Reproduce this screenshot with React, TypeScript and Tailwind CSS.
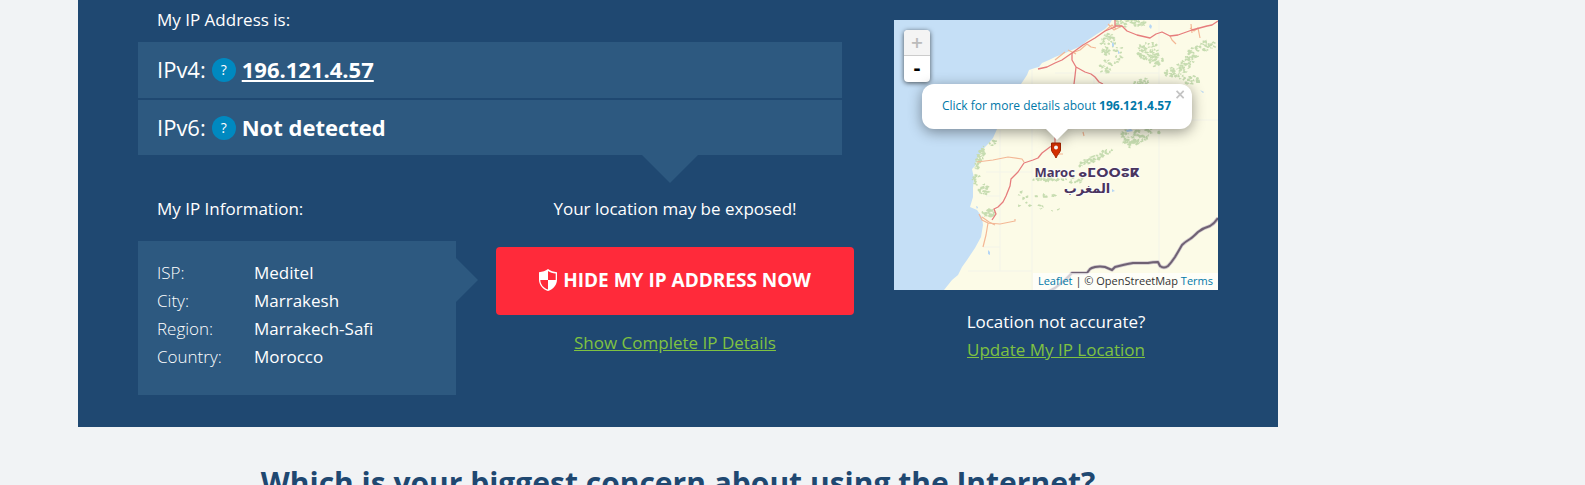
import React from "react";

type Cluster = [cx: number, cy: number, rx: number, ry: number, tilt: number, count: number];

const forests: Cluster[] = [
  [236, 3, 17, 4, 0, 50],
  [214, 24, 8, 11, 0.2, 46],
  [211, 46, 7, 7, 0, 22],
  [224, 36, 4, 12, 0.2, 14],
  [254, 31, 11, 9, -0.2, 70],
  [262, 41, 8, 6, 0.4, 24],
  [284, 50, 14, 7, -0.5, 60],
  [298, 35, 6, 10, 0.5, 34],
  [314, 26, 8, 6, 0, 26],
  [296, 60, 10, 4, 0, 22],
  [248, 62, 11, 4, -0.3, 18],
  [240, 116, 15, 6, 0.1, 50],
  [236, 123, 9, 4, 0, 26],
  [258, 110, 9, 5, 0, 16],
  [205, 136, 15, 3, -0.45, 44],
  [188, 143, 5, 2, -0.6, 8],
  [86, 138, 3, 14, 0.4, 44],
  [98, 122, 5, 4, 0, 8],
  [90, 170, 5, 6, 0, 26],
  [82, 160, 3, 7, 0, 10],
  [95, 193, 7, 4, 0, 44],
  [155, 159, 16, 2, 0, 34],
  [128, 178, 10, 8, 0, 8],
  [152, 176, 10, 2, 0, 10],
  [178, 160, 12, 3, 0, 10],
  [150, 188, 20, 4, 0, 6],
];

function forestPath(): string {
  let seed = 11;
  const rnd = () => {
    seed = (seed * 16807) % 2147483647;
    return seed / 2147483647;
  };
  let d = "";
  for (const [cx, cy, rx, ry, tilt, count] of forests) {
    for (let i = 0; i < count; i++) {
      const a = rnd() * Math.PI * 2;
      const r = Math.sqrt(rnd());
      const u = Math.cos(a) * r * rx;
      const v = Math.sin(a) * r * ry;
      const x = cx + u * Math.cos(tilt) - v * Math.sin(tilt);
      const y = cy + u * Math.sin(tilt) + v * Math.cos(tilt);
      for (let k = 0; k < 6; k++) {
        const t = (k / 6) * Math.PI * 2;
        const q = 0.2 + rnd() * 1.7;
        d += `${k ? "L" : "M"}${(x + Math.cos(t) * q * 1.3).toFixed(1)} ${(y + Math.sin(t) * q).toFixed(1)}`;
      }
      d += "Z";
    }
  }
  return d;
}

const woodland = forestPath();

const border =
  "M324 198Q321 203 316 206Q309 208 304 212Q299 217 296 219Q291 222 288 225Q284 232 281 237Q277 243 274 246Q270 249 266 246L264 242Q259 242 254 243H239Q233 244 229 245Q225 246 221 247L218 250L211 247Q206 246 201 247Q197 248 196 249L193 253L178 253L171 260L161 268L155 271";

function MapDrawing() {
  return (
    <svg viewBox="0 0 324 270" preserveAspectRatio="xMidYMid slice" className="block h-full w-full" aria-hidden="true">
      <rect width="324" height="270" fill="#c5dff6" />
      <path
        fill="#fcfbe7"
        d="M218 0L215 5L211 9L203 14L194 20L187 26L178 30L169 34L161 37L155 40L148 43L145 47L141 48L135 50L133 55L127 64L118 82L112 98L103 109L99 118L94 124L89 129L85 135L82 141L81 146L78 149L80 158L79 168L79 177L76 187L83 190L88 197L89 205L87 217L81 228L73 240L68 247L64 255L58 260L50 270H324V0Z"
      />
      <path
        fill="none"
        stroke="#f3f4e9"
        d="M106 110V251M138 50V270M74 251H138M92 152H138M90 227H106M265 0V270M161 53H265M92 176H106M265 100H324M200 53V64"
      />
      <path d={woodland} fill="#c6dcb0" />
      <g fill="#b5d6f5">
        <path d="M256 4l2 2l-1 3l-2-2zM218 22l2 2v3l-2-1zM224 30l2 3l-2 1zM306 70l4 2l-1 1zM232 110l5-1l2 2l-6 1zM218 169l3 2l-3 1zM94 230l2 2v3l-2-1zM82 186l2 1l-1 2z" />
      </g>
      <g fill="none" stroke="#f3b795" strokeWidth="1.2" strokeLinejoin="round">
        <path d="M130 142L128 139L114 137L99 140L83 142M85 194L88 200L94 203L106 204L121 201V199M94 203L92 215L89 227" />
        <path d="M276 16L278 20L282 24M178 33L186 30L193 24M193 24L197 27L202 28M296 8L300 11L304 8L306 18M171 32L161 40M211 11L218 5L222 9M174 30L182 34M189 112L190 116" />
        <path d="M88 197L95 202L101 205M297 4L298 13M214 4L220 10L228 6M163 134H169" />
      </g>
      <g fill="none" stroke="#e67c7c" strokeWidth="1.3" strokeLinejoin="round">
        <path d="M221 0V7L211 11L201 18L189 25L178 33L168 40L161 43L153 47L144 49" />
        <path d="M221 6L228 6L233 11L243 15L256 18L262 14L268 12L276 16L284 15L298 10L313 6L318 5L324 1" />
        <path d="M178 33V40L182 47L181 56L180 64M182 47L191 52L197 54L201 57L205 62L209 64" />
        <path d="M161 117V124L156 127L148 133L144 138L139 140L130 143L124 152L117 159L116 166L112 176L109 182L104 187L100 189L102 194L98 200" />
      </g>
      <path fill="none" stroke="#cfc7cc" strokeWidth="3.5" strokeLinejoin="round" d={border} />
      <path fill="none" stroke="#6f6173" strokeWidth="2" strokeLinejoin="round" d={border} />
    </svg>
  );
}

function PinIcon() {
  return (
    <svg viewBox="0 0 12 17" className="block h-[17px] w-3" aria-hidden="true">
      <path d="M1.500 1H10.500V8C10.500 10 7 13 6 16C5 13 1.500 10 1.500 8Z" fill="#d63000" stroke="#a32400" />
      <circle cx="6" cy="5.5" r="2" fill="#fff" />
    </svg>
  );
}

function ShieldIcon() {
  return (
    <svg viewBox="0 0 18 22" className="h-[22px] w-[18px] shrink-0" fill="currentColor" aria-hidden="true">
      <path
        fillRule="evenodd"
        d="M9 0C11.500 1.800 14.500 2.900 18 3.300V10.500C18 16 14.500 20 9 22C3.500 20 0 16 0 10.500V3.300C3.500 2.900 6.500 1.800 9 0ZM9 2V11H16.700V4.600C13.800 4.200 11.200 3.400 9 2ZM9 11H1.300C1.500 15.500 4.500 19 9 20.600Z"
      />
    </svg>
  );
}

function HelpButton({ label }: { label: string }) {
  return (
    <button
      type="button"
      aria-label={label}
      className="flex h-6 w-6 shrink-0 items-center justify-center rounded-full bg-[#0089c0] text-sm leading-none text-white"
    >
      ?
    </button>
  );
}

const details = [
  ["ISP:", "Meditel"],
  ["City:", "Marrakesh"],
  ["Region:", "Marrakech-Safi"],
  ["Country:", "Morocco"],
];

function LocationMap() {
  return (
    <div className="relative h-[270px] w-full overflow-hidden bg-[#c5dff6]">
      <MapDrawing />
      <div className="absolute left-[193px] top-[144px] -translate-x-1/2 whitespace-nowrap text-center font-['Noto_Sans','DejaVu_Sans',sans-serif] text-[13px] font-bold leading-4 text-[#4a3560] [text-shadow:0_0_2px_#fff,0_0_2px_#fff,0_0_3px_#fff]">
        <p>Maroc ⴰⵎⵔⵔⵓⴽ</p>
        <p lang="ar" dir="rtl">المغرب</p>
      </div>
      <div className="absolute left-[156px] top-[122px]">
        <PinIcon />
      </div>
      <div className="absolute left-2.5 top-2.5 flex flex-col overflow-hidden rounded-sm bg-white text-center font-['DejaVu_Sans',sans-serif] font-bold shadow-[0_1px_5px_rgba(0,0,0,0.65)]">
        <button type="button" disabled aria-label="Zoom in" className="h-[26px] w-[26px] border-b border-[#ccc] bg-[#f4f4f4] text-base leading-none text-[#bbb]">
          +
        </button>
        <button type="button" aria-label="Zoom out" className="h-[26px] w-[26px] text-lg leading-none text-black">
          -
        </button>
      </div>
      <div className="absolute left-7 top-16 drop-shadow-[0_3px_7px_rgba(0,0,0,0.4)]">
        <div className="w-[270px] rounded-xl bg-white pb-[13px] pl-5 pr-2 pt-[11px] text-left text-xs leading-[21px] text-[#0078a8]">
          <a href="#details" className="whitespace-nowrap">
            Click for more details about <b>196.121.4.57</b>
          </a>
          <button type="button" aria-label="Close popup" className="absolute right-1 top-0.5 h-4 w-4 text-center font-['DejaVu_Sans',sans-serif] text-sm font-bold leading-4 text-[#c3c3c3]">
            ×
          </button>
        </div>
        <svg viewBox="0 0 22 11" className="mx-auto block h-[11px] w-[22px]" aria-hidden="true">
          <path d="M0 0H22L11 11Z" fill="#fff" />
        </svg>
      </div>
      <div className="absolute bottom-0 right-0 whitespace-nowrap bg-white/70 px-[5px] pb-px text-[11px] leading-4 text-[#333]">
        <a href="#leaflet" className="text-[#0078a8]">Leaflet</a> | © OpenStreetMap{" "}
        <a href="#terms" className="text-[#0078a8]">Terms</a>
      </div>
    </div>
  );
}

export default function App() {
  return (
    <main className="min-h-screen overflow-hidden bg-[#f1f3f5] pl-[78px] font-['Open_Sans',sans-serif] text-[17px] leading-7 text-white">
      <div className="max-w-[1200px]">
        <section className="flex gap-10 bg-[#1f4871] px-[60px] pb-8">
          <div className="min-w-0 flex-1">
            <div className="mr-3">
              <h2 className="px-[19px] pb-2 pt-1.5">My IP Address is:</h2>
              <div className="flex flex-col gap-0.5 text-[22px]">
                <div className="flex h-14 items-center gap-1.5 bg-[#2d5980] px-[19px]">
                  <span className="pb-0.5">IPv4:</span>
                  <HelpButton label="About IPv4" />
                  <a href="#ipv4" className="pb-0.5 font-bold underline">196.121.4.57</a>
                </div>
                <div className="flex h-[55px] items-center gap-1.5 bg-[#2d5980] px-[19px]">
                  <span className="pb-0.5">IPv6:</span>
                  <HelpButton label="About IPv6" />
                  <span className="pb-0.5 font-bold">Not detected</span>
                </div>
              </div>
            </div>
            <div className="flex gap-10">
              <div className="w-[318px] shrink-0 pt-10">
                <h2 className="px-[19px]">My IP Information:</h2>
                <div className="relative mt-[18px] bg-[#2d5980] px-[19px] pb-6 pt-[18px]">
                  <dl className="grid grid-cols-[97px_1fr]">
                    {details.map(([name, value]) => (
                      <React.Fragment key={name}>
                        <dt className="font-light">{name}</dt>
                        <dd>{value}</dd>
                      </React.Fragment>
                    ))}
                  </dl>
                  <svg viewBox="0 0 22 44" className="absolute left-full top-[17px] h-11 w-[22px]" aria-hidden="true">
                    <path d="M0 0L22 22L0 44Z" fill="#2d5980" />
                  </svg>
                </div>
              </div>
              <div className="flex min-w-0 flex-1 flex-col items-center">
                <svg viewBox="0 0 56 28" className="mr-2.5 block h-7 w-14" aria-hidden="true">
                  <path d="M0 0H56L28 28Z" fill="#2d5980" />
                </svg>
                <p className="mt-3">Your location may be exposed!</p>
                <button type="button" className="mt-6 flex h-[68px] w-full items-center justify-center gap-1.5 rounded-sm bg-[#ff2a3a] pb-0.5 text-[19px] font-bold">
                  <ShieldIcon />
                  HIDE MY IP ADDRESS NOW
                </button>
                <a href="#complete-details" className="mt-3.5 text-[#7fc241] underline">
                  Show Complete IP Details
                </a>
              </div>
            </div>
          </div>
          <div className="w-[324px] shrink-0 pt-5 text-center">
            <LocationMap />
            <p className="mt-[18px]">Location not accurate?</p>
            <a href="#update" className="text-[#7fc241] underline">Update My IP Location</a>
          </div>
        </section>
        <h1 className="mt-9 text-center text-3xl font-bold leading-10 text-[#1f4871]">
          Which is your biggest concern about using the Internet?
        </h1>
      </div>
    </main>
  );
}
